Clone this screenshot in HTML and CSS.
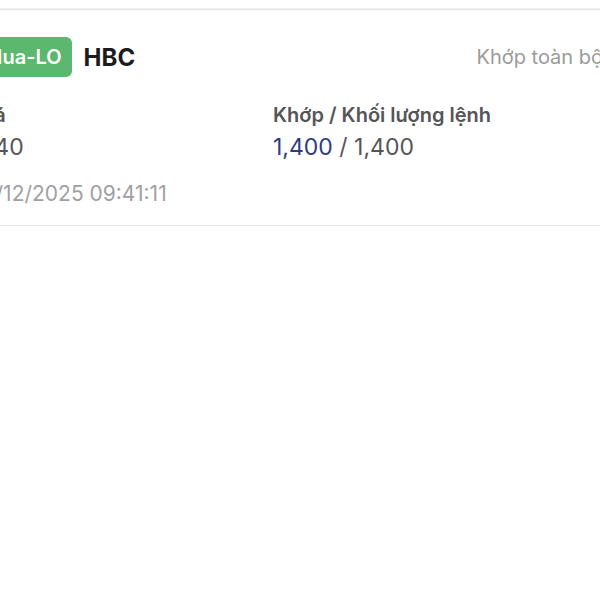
FILE: index.html
```html
<!DOCTYPE html>
<html lang="vi">
<head>
    <meta charset="UTF-8">
    <meta name="viewport" content="width=device-width, initial-scale=1.0">
    <title>Sổ lệnh</title>
    <link rel="stylesheet" href="styles.css">
</head>
<body>
<div class="screen">
    <!-- Order item -->
    <div class="order-card">
        <div class="order-head">
            <div class="order-title">
                <span class="badge buy">Mua-LO</span>
                <span class="symbol">HBC</span>
            </div>
            <span class="status">Khớp toàn bộ</span>
        </div>
        <div class="order-info">
            <div class="info-col">
                <div class="label">Giá</div>
                <div class="value">8.40</div>
            </div>
            <div class="info-col">
                <div class="label">Khớp / Khối lượng lệnh</div>
                <div class="value"><span class="matched">1,400</span> / 1,400</div>
            </div>
        </div>
        <div class="order-time">18/12/2025 09:41:11</div>
    </div>
</div>
</body>
</html>
```

FILE: styles.css
```css
body {
    margin: 0;
    background: #fff;
    font-family: Inter, "Noto Sans", sans-serif;
    overflow: hidden;
}
.screen {
    padding-top: 9px;
    width: 600px;
    overflow: hidden;
}
.order-card {
    margin-left: -26px;
    width: 629px;
    border-top: 1px solid #e3e3e3;
    border-bottom: 1px solid #e3e3e3;
    padding: 27px 0 18px;
    box-shadow: 0 -1px 0 #f2f2f2;
}
.order-head {
    display: flex;
    justify-content: space-between;
    align-items: center;
    height: 40px;
}
.order-title {
    display: flex;
    align-items: center;
    gap: 12px;
}
.badge {
    height: 40px;
    padding: 0 10px;
    display: flex;
    align-items: center;
    border-radius: 6px;
    color: #fff;
    font-size: 20px;
    font-weight: 600;
}
.badge.buy {
    background: #5bb86e;
}
.symbol {
    font-size: 24px;
    font-weight: 700;
    color: #1c1c1e;
}
.status {
    font-size: 20px;
    color: #9b9b9b;
}
.order-info {
    display: grid;
    grid-template-columns: 299px 1fr;
    margin-top: 26px;
}
.label {
    font-size: 20px;
    line-height: 24px;
    font-weight: 600;
    color: #555558;
}
.value {
    margin-top: 6px;
    font-size: 23px;
    line-height: 28px;
    color: #555558;
}
.matched {
    color: #2f3b80;
}
.order-time {
    margin-top: 20px;
    font-size: 21px;
    line-height: 26px;
    color: #a0a0a3;
}
```
